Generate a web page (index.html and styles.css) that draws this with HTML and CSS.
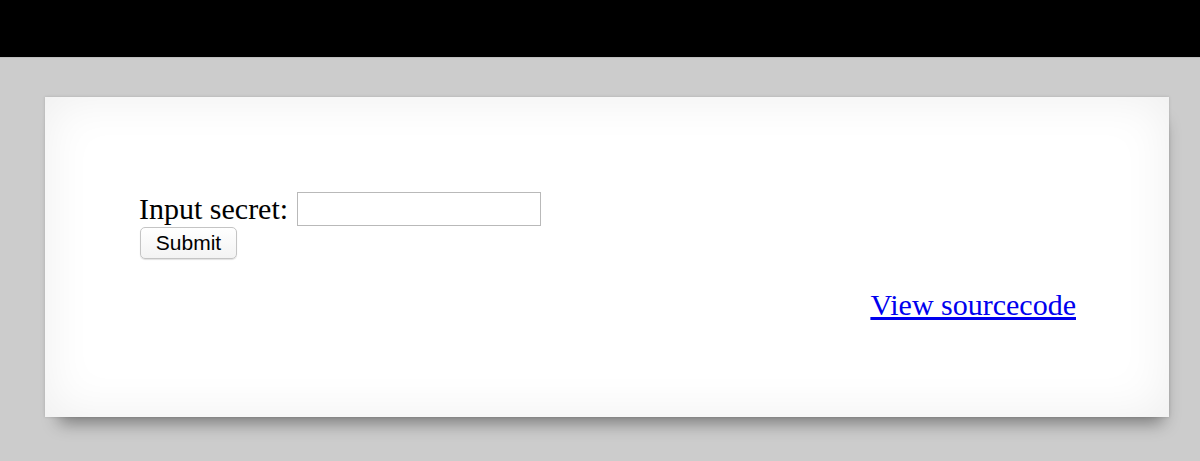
FILE: index.html
```html
<!DOCTYPE html>
<html>
<head>
<meta charset="utf-8">
<link rel="stylesheet" href="styles.css">
</head>
<body>
<div class="topbar"></div>
<div class="stage">
  <div class="card">
    <form class="secret-form">
      <label class="label">Input secret: <input class="field" type="text"></label><br>
      <button class="submit" type="button">Submit</button>
    </form>
    <div class="links"><a class="source" href="#">View sourcecode</a></div>
  </div>
</div>
</body>
</html>
```
FILE: styles.css
```css
html, body {
  margin: 0;
  padding: 0;
  background: #cccccc;
  height: 461px;
  overflow: hidden;
}
.topbar {
  height: 57px;
  background: #000;
  border-bottom: 1px solid #bdbdbd;
}
.stage {
  padding: 39px 0 0 45px;
}
.card {
  width: 1124px;
  height: 320px;
  box-sizing: border-box;
  background: #fff;
  padding: 95px 93px 0 94px;
  box-shadow: inset 0 0 50px rgba(0,0,0,0.07), 0 0 3px rgba(0,0,0,0.15), 4px 16px 16px -10px rgba(0,0,0,0.4);
  font-family: "Liberation Serif", "Times New Roman", serif;
  font-size: 30px;
  color: #000;
}
.secret-form {
  margin: 0;
  line-height: 34px;
}
.label {
  font-size: 30px;
}
.field {
  width: 244px;
  height: 34px;
  box-sizing: border-box;
  border: 1px solid #b9b9b9;
  margin: 0 0 0 1px;
  padding: 0;
  vertical-align: top;
}
.submit {
  display: inline-block;
  margin: 1px 0 0 1px;
  width: 97px;
  height: 32px;
  box-sizing: border-box;
  font-family: "Liberation Sans", Arial, sans-serif;
  font-size: 21px;
  color: #000;
  background: linear-gradient(#ffffff, #f3f3f3);
  border: 1px solid #c4c4c4;
  border-radius: 5px;
  box-shadow: 0 1px 1px rgba(0,0,0,0.12);
  padding: 0;
  vertical-align: top;
  line-height: 28px;
}
.links {
  text-align: right;
  margin-top: 28px;
  line-height: 34px;
}
.source {
  color: #0000ee;
  text-decoration: underline;
}
```
